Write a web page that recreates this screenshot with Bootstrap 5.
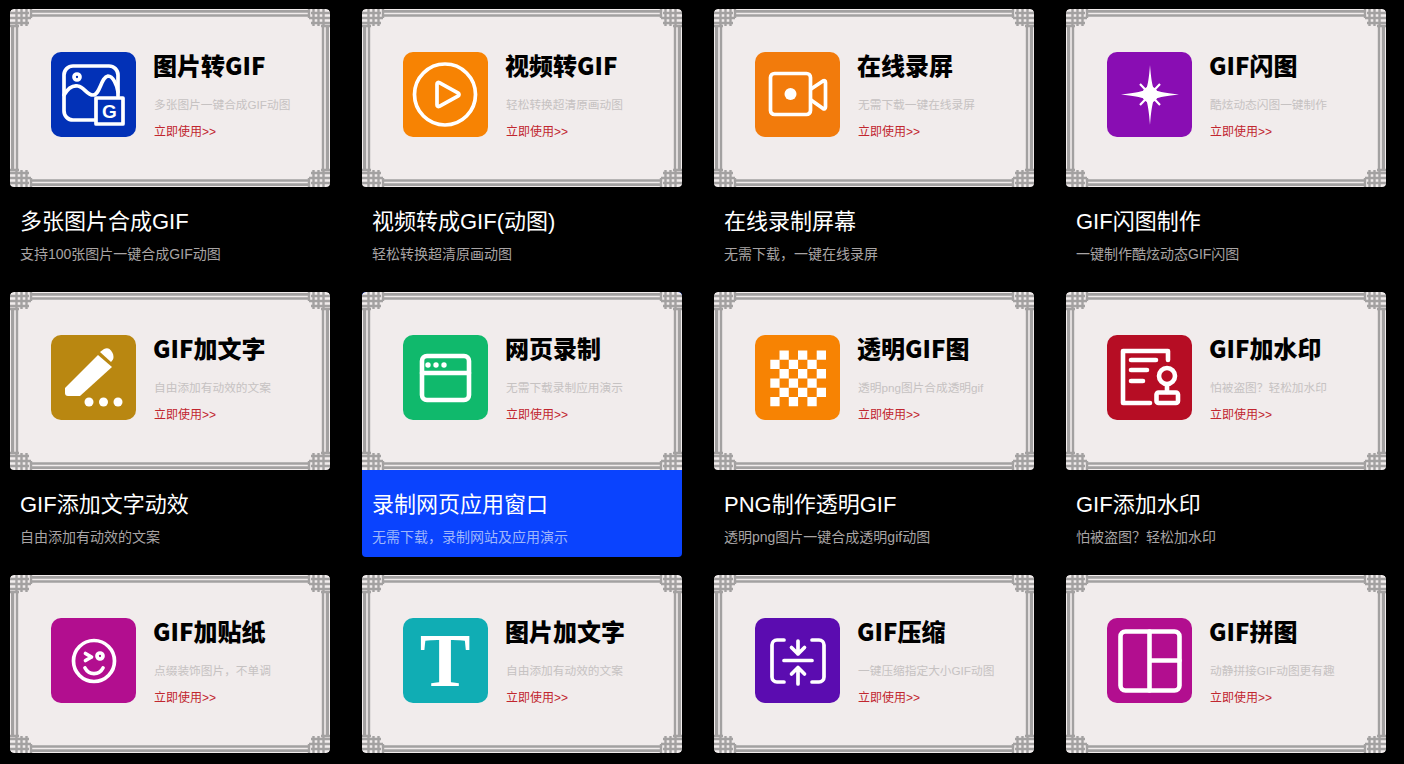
<!DOCTYPE html>
<html lang="zh"><head><meta charset="utf-8"><title>GIF tools</title>
<link href="https://cdn.jsdelivr.net/npm/bootstrap@5.3.0/dist/css/bootstrap.min.css" rel="stylesheet">
<style>
html,body{background:#000;overflow:hidden;height:764px}
body{font-family:"Liberation Sans","Noto Sans CJK SC",sans-serif}
.tool-grid{display:grid;grid-template-columns:repeat(4,320px);column-gap:32px;row-gap:18px;padding:9px 0 0 10px}
.tool-item{height:265px;border-radius:4px;overflow:hidden;color:#fff}
.tool-item:nth-child(n+9){height:178px}
.tool-item.is-active{background:#0a43fe}
.tool-thumb{position:relative;height:178px;background:#f1ecec;border-radius:4px;padding:43px 0 0 41px;gap:18px}
.is-active .tool-thumb{border-radius:4px 4px 0 0}
.tool-frame{position:absolute;inset:0;width:320px;height:178px}
.tool-icon{width:85px;height:85px;border-radius:10px;flex:none}
.tool-icon svg{display:block;width:85px;height:85px}
.tool-name{font-family:"Noto Sans CJK SC",sans-serif;font-weight:900;font-size:24px;line-height:30px;color:#000;margin:-2px 0 0 -1px;white-space:nowrap}
.tool-desc{font-size:11.7px;line-height:14px;color:#c6c2c2;margin:18px 0 0;white-space:nowrap}
.tool-go{font-size:12px;line-height:14px;color:#c1262f;margin:13px 0 0}
.tool-caption{padding:19px 10px 0}
.tool-title{font-size:22px;line-height:32px;font-weight:400;color:#fff;margin:0;white-space:nowrap}
.tool-sub{font-size:14px;line-height:18px;color:#a8a4a4;margin:7px 0 0;white-space:nowrap}
.is-active .tool-sub{color:#9fb6fb}
.bg-1{background:#0231b7}.bg-2{background:#f78303}.bg-3{background:#f27b0c}.bg-4{background:#890db3}
.bg-5{background:#b98711}.bg-6{background:#10b96c}.bg-7{background:#f78303}.bg-8{background:#b60d24}
.bg-9{background:#b20e8f}.bg-10{background:#10adb4}.bg-11{background:#5b0cb0}.bg-12{background:#b20e8f}
.ic{fill:none;stroke:#fff;stroke-width:3.7;stroke-linecap:round;stroke-linejoin:round}
.ic-4{stroke-width:4.600}
.if{fill:#fff;stroke:none}
.fr-line{fill:none;stroke:#a3a1a1;stroke-width:2.400}
.t-serif{font-family:"Liberation Serif",serif;font-weight:700;font-size:76px;fill:#fff}
.t-g{font-family:"Liberation Sans",sans-serif;font-weight:700;font-size:19px;fill:#fff}
</style></head><body>
<svg width="0" height="0" class="d-block position-absolute" aria-hidden="true"><defs>
<g id="corner" class="fr-line">
<path d="M0 4H19M0 9H21M0 14H19M6.500 0V17M11.500 0V17M16.500 0V17"/>
<path d="M21 0V9M0 17H9"/>
</g>
<symbol id="frame" viewBox="0 0 320 178">
<g fill="none" stroke="#a3a1a1">
<path stroke-width="2.800" d="M20 2.400H300M20 175.600H300"/>
<path stroke-width="2.400" d="M20 6.500H300M20 171.500H300"/>
<path stroke-width="3.200" d="M2.600 17V161M317.400 17V161"/>
<path stroke-width="2.400" d="M7 17V161M313 17V161"/>
</g>
<use href="#corner"/>
<use href="#corner" transform="matrix(-1 0 0 1 320 0)"/>
<use href="#corner" transform="matrix(1 0 0 -1 0 178)"/>
<use href="#corner" transform="matrix(-1 0 0 -1 320 178)"/>
</symbol></defs></svg>

<main class="tool-grid">

<a class="tool-item d-block text-decoration-none"><div class="tool-thumb d-flex"><svg class="tool-frame"><use href="#frame"/></svg>
<div class="tool-icon bg-1"><svg viewBox="0 0 85 85"><path class="ic" d="M44 68H22a9 9 0 0 1-9-9V23a9 9 0 0 1 9-9H58a9 9 0 0 1 9 9V44"/><circle class="ic" cx="26" cy="25" r="3" stroke-width="2.500"/><path class="ic" d="M13 43C17 36 22 33 27 34C33 35 36 43 42 43C49 43 50 25 57 24C62 24 66 33 67 40"/><rect class="ic" x="45" y="46" width="27" height="26" fill="#0231b7" stroke-width="2.800"/><text class="t-g" x="58.500" y="66" text-anchor="middle">G</text></svg></div>
<div><h3 class="tool-name">图片转GIF</h3><p class="tool-desc">多张图片一键合成GIF动图</p><p class="tool-go">立即使用&gt;&gt;</p></div></div>
<div class="tool-caption"><h2 class="tool-title">多张图片合成GIF</h2><p class="tool-sub">支持100张图片一键合成GIF动图</p></div></a>

<a class="tool-item d-block text-decoration-none"><div class="tool-thumb d-flex"><svg class="tool-frame"><use href="#frame"/></svg>
<div class="tool-icon bg-2"><svg viewBox="0 0 85 85"><circle class="ic" cx="42" cy="42.500" r="30.500"/><path class="ic" d="M34 32a1.500 1.500 0 0 1 2.300-1.300l19 10.500a1.500 1.500 0 0 1 0 2.600l-19 10.500A1.500 1.500 0 0 1 34 53z"/></svg></div>
<div><h3 class="tool-name">视频转GIF</h3><p class="tool-desc">轻松转换超清原画动图</p><p class="tool-go">立即使用&gt;&gt;</p></div></div>
<div class="tool-caption"><h2 class="tool-title">视频转成GIF(动图)</h2><p class="tool-sub">轻松转换超清原画动图</p></div></a>

<a class="tool-item d-block text-decoration-none"><div class="tool-thumb d-flex"><svg class="tool-frame"><use href="#frame"/></svg>
<div class="tool-icon bg-3"><svg viewBox="0 0 85 85"><rect class="ic" x="15.500" y="21.500" width="40" height="41" rx="4"/><path class="ic" d="M56 37l12-8c1.500-.8 2.500 0 2.500 1.500V55c0 1.500-1 2.300-2.500 1.500L56 48"/><circle class="if" cx="35.500" cy="42" r="6"/></svg></div>
<div><h3 class="tool-name">在线录屏</h3><p class="tool-desc">无需下载一键在线录屏</p><p class="tool-go">立即使用&gt;&gt;</p></div></div>
<div class="tool-caption"><h2 class="tool-title">在线录制屏幕</h2><p class="tool-sub">无需下载，一键在线录屏</p></div></a>

<a class="tool-item d-block text-decoration-none"><div class="tool-thumb d-flex"><svg class="tool-frame"><use href="#frame"/></svg>
<div class="tool-icon bg-4"><svg viewBox="0 0 85 85"><path class="if" d="M43 13C44 26 45 32 47 38C53 40 60 41 72 42.500C60 44 53 45 47 47C45 53 44 60 43 73C42 60 41 53 39 47C33 45 26 44 14 42.500C26 41 33 40 39 38C41 32 42 26 43 13Z"/><path d="M33 32L53 53M53 32L33 53" stroke="#fff" stroke-width="2.200"/><circle class="if" cx="43" cy="42.500" r="8"/></svg></div>
<div><h3 class="tool-name">GIF闪图</h3><p class="tool-desc">酷炫动态闪图一键制作</p><p class="tool-go">立即使用&gt;&gt;</p></div></div>
<div class="tool-caption"><h2 class="tool-title">GIF闪图制作</h2><p class="tool-sub">一键制作酷炫动态GIF闪图</p></div></a>

<a class="tool-item d-block text-decoration-none"><div class="tool-thumb d-flex"><svg class="tool-frame"><use href="#frame"/></svg>
<div class="tool-icon bg-5"><svg viewBox="0 0 85 85"><path class="if" d="M14 53L47 20L61 32L29 61H17a3 3 0 0 1-3-3z"/><path class="if" d="M49 17l4-3c2-1 4-1 5.500 0 2.500 2 4 5 4 8 0 2-1 3.500-2.500 5z"/><circle class="if" cx="38" cy="67" r="4.500"/><circle class="if" cx="52.500" cy="67" r="4.500"/><circle class="if" cx="67" cy="67" r="4.500"/></svg></div>
<div><h3 class="tool-name">GIF加文字</h3><p class="tool-desc">自由添加有动效的文案</p><p class="tool-go">立即使用&gt;&gt;</p></div></div>
<div class="tool-caption"><h2 class="tool-title">GIF添加文字动效</h2><p class="tool-sub">自由添加有动效的文案</p></div></a>

<a class="tool-item is-active d-block text-decoration-none"><div class="tool-thumb d-flex"><svg class="tool-frame"><use href="#frame"/></svg>
<div class="tool-icon bg-6"><svg viewBox="0 0 85 85"><rect class="ic ic-4" x="19" y="21" width="47" height="44" rx="5"/><path class="ic ic-4" d="M19 38H66"/><circle class="if" cx="25" cy="30" r="2.700"/><circle class="if" cx="33" cy="30" r="2.700"/><circle class="if" cx="41" cy="30" r="2.700"/></svg></div>
<div><h3 class="tool-name">网页录制</h3><p class="tool-desc">无需下载录制应用演示</p><p class="tool-go">立即使用&gt;&gt;</p></div></div>
<div class="tool-caption"><h2 class="tool-title">录制网页应用窗口</h2><p class="tool-sub">无需下载，录制网站及应用演示</p></div></a>

<a class="tool-item d-block text-decoration-none"><div class="tool-thumb d-flex"><svg class="tool-frame"><use href="#frame"/></svg>
<div class="tool-icon bg-7"><svg viewBox="0 0 85 85"><path class="if" d="M24.500 15.500h9.300v9.300h-9.300zM43 15.500h9.300v9.300h-9.300zM61.700 15.500h9.300v9.300h-9.300zM15.300 24.800h9.300v9.300h-9.300zM33.800 24.800h9.300v9.300h-9.300zM52.400 24.800h9.300v9.300h-9.300zM24.500 34.100h9.300v9.300h-9.300zM43 34.100h9.300v9.300h-9.300zM61.700 34.100h9.300v9.300h-9.300zM15.300 43.400h9.300v9.300h-9.300zM33.800 43.400h9.300v9.300h-9.300zM52.400 43.400h9.300v9.300h-9.300zM24.500 52.700h9.300v9.300h-9.300zM43 52.700h9.300v9.300h-9.300zM61.700 52.700h9.300v9.300h-9.300zM15.300 62h9.300v9.300h-9.300zM33.800 62h9.300v9.300h-9.300zM52.400 62h9.300v9.300h-9.300z"/></svg></div>
<div><h3 class="tool-name">透明GIF图</h3><p class="tool-desc">透明png图片合成透明gif</p><p class="tool-go">立即使用&gt;&gt;</p></div></div>
<div class="tool-caption"><h2 class="tool-title">PNG制作透明GIF</h2><p class="tool-sub">透明png图片一键合成透明gif动图</p></div></a>

<a class="tool-item d-block text-decoration-none"><div class="tool-thumb d-flex"><svg class="tool-frame"><use href="#frame"/></svg>
<div class="tool-icon bg-8"><svg viewBox="0 0 85 85"><path class="ic ic-4" d="M43 68H16V16H61V25"/><path class="ic ic-4" d="M24 25H49M24 35H40M24 46H36"/><circle class="ic ic-4" cx="60" cy="41" r="8"/><path class="ic ic-4" d="M60 50V57"/><rect class="ic ic-4" x="49.500" y="57.500" width="21.500" height="10.500" rx="2"/></svg></div>
<div><h3 class="tool-name">GIF加水印</h3><p class="tool-desc">怕被盗图？轻松加水印</p><p class="tool-go">立即使用&gt;&gt;</p></div></div>
<div class="tool-caption"><h2 class="tool-title">GIF添加水印</h2><p class="tool-sub">怕被盗图？轻松加水印</p></div></a>

<a class="tool-item d-block text-decoration-none"><div class="tool-thumb d-flex"><svg class="tool-frame"><use href="#frame"/></svg>
<div class="tool-icon bg-9"><svg viewBox="0 0 85 85"><circle class="ic" cx="43" cy="43" r="20.500"/><path class="ic" d="M34.500 35.500l6 3.500-6 3.500" stroke-width="2.800"/><circle class="ic" cx="49" cy="38" r="3" stroke-width="2.800"/><path class="ic" d="M34 50c4 7.500 14 7.500 18 0"/></svg></div>
<div><h3 class="tool-name">GIF加贴纸</h3><p class="tool-desc">点缀装饰图片，不单调</p><p class="tool-go">立即使用&gt;&gt;</p></div></div></a>

<a class="tool-item d-block text-decoration-none"><div class="tool-thumb d-flex"><svg class="tool-frame"><use href="#frame"/></svg>
<div class="tool-icon bg-10"><svg viewBox="0 0 85 85"><text class="t-serif" x="42" y="68" text-anchor="middle">T</text></svg></div>
<div><h3 class="tool-name">图片加文字</h3><p class="tool-desc">自由添加有动效的文案</p><p class="tool-go">立即使用&gt;&gt;</p></div></div></a>

<a class="tool-item d-block text-decoration-none"><div class="tool-thumb d-flex"><svg class="tool-frame"><use href="#frame"/></svg>
<div class="tool-icon bg-11"><svg viewBox="0 0 85 85"><path class="ic" d="M29 22H22a5 5 0 0 0-5 5V59a5 5 0 0 0 5 5H29M57 22H64a5 5 0 0 1 5 5V59a5 5 0 0 1-5 5H57"/><path class="ic" d="M29 42.500H57M43 23V36M36.500 29.500L43 36L49.500 29.500M43 66V49.500M36.500 56L43 49.500L49.500 56"/></svg></div>
<div><h3 class="tool-name">GIF压缩</h3><p class="tool-desc">一键压缩指定大小GIF动图</p><p class="tool-go">立即使用&gt;&gt;</p></div></div></a>

<a class="tool-item d-block text-decoration-none"><div class="tool-thumb d-flex"><svg class="tool-frame"><use href="#frame"/></svg>
<div class="tool-icon bg-12"><svg viewBox="0 0 85 85"><rect class="ic ic-4" x="13.500" y="13.500" width="59" height="59" rx="5"/><path class="ic ic-4" d="M42.500 13.500V72.500M42.500 42.500H72.500"/></svg></div>
<div><h3 class="tool-name">GIF拼图</h3><p class="tool-desc">动静拼接GIF动图更有趣</p><p class="tool-go">立即使用&gt;&gt;</p></div></div></a>

</main>
<script src="https://cdn.jsdelivr.net/npm/bootstrap@5.3.0/dist/js/bootstrap.bundle.min.js"></script>
</body></html>
